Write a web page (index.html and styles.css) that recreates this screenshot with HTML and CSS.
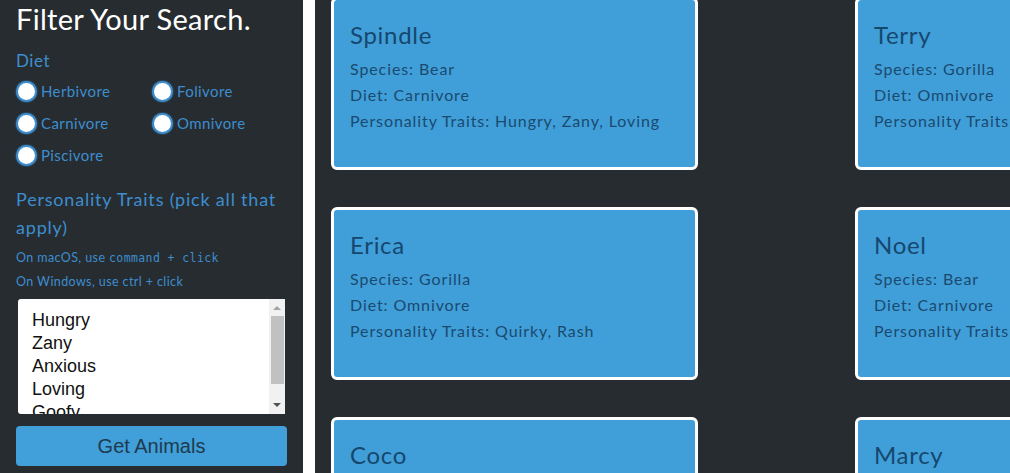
FILE: index.html
```html
<!DOCTYPE html>
<html>
<head>
<meta charset="utf-8">
<link rel="stylesheet" href="styles.css">
</head>
<body>
<div class="page">
  <aside class="sidebar">
    <h1 class="title">Filter Your Search.</h1>
    <div class="label">Diet</div>
    <div class="radios">
      <label class="radio"><input type="radio" name="diet"><span>Herbivore</span></label>
      <label class="radio"><input type="radio" name="diet"><span>Folivore</span></label>
      <label class="radio"><input type="radio" name="diet"><span>Carnivore</span></label>
      <label class="radio"><input type="radio" name="diet"><span>Omnivore</span></label>
      <label class="radio"><input type="radio" name="diet"><span>Piscivore</span></label>
    </div>
    <div class="label traits">Personality Traits (pick all that apply)</div>
    <p class="hint first">On macOS, use <code>command + click</code></p>
    <p class="hint">On Windows, use ctrl + click</p>
    <div class="listbox" role="listbox" aria-multiselectable="true">
      <div class="options">
        <div class="option" role="option">Hungry</div>
        <div class="option" role="option">Zany</div>
        <div class="option" role="option">Anxious</div>
        <div class="option" role="option">Loving</div>
        <div class="option" role="option">Goofy</div>
      </div>
      <div class="scrollbar">
        <span class="arrow up"></span>
        <span class="thumb"></span>
        <span class="arrow down"></span>
      </div>
    </div>
    <button class="btn">Get Animals</button>
  </aside>
  <div class="divider"></div>
  <main class="main">
    <div class="grid">
      <div class="card"><h2>Spindle</h2><p>Species: Bear</p><p>Diet: Carnivore</p><p>Personality Traits: Hungry, Zany, Loving</p></div>
      <div class="card"><h2>Terry</h2><p>Species: Gorilla</p><p>Diet: Omnivore</p><p>Personality Traits: Goofy, Anxious</p></div>
      <div class="card"><h2>Erica</h2><p>Species: Gorilla</p><p>Diet: Omnivore</p><p>Personality Traits: Quirky, Rash</p></div>
      <div class="card"><h2>Noel</h2><p>Species: Bear</p><p>Diet: Carnivore</p><p>Personality Traits: Loving, Goofy</p></div>
      <div class="card"><h2>Coco</h2><p>Species: Bear</p><p>Diet: Herbivore</p><p>Personality Traits: Zany</p></div>
      <div class="card"><h2>Marcy</h2><p>Species: Gorilla</p><p>Diet: Folivore</p><p>Personality Traits: Anxious</p></div>
    </div>
  </main>
</div>
</body>
</html>
```
FILE: styles.css
```css
html, body {
  margin: 0;
  padding: 0;
  height: 100%;
  overflow: hidden;
  background: #272c30;
}
.page {
  display: flex;
  height: 473px;
  overflow: hidden;
}
.sidebar {
  width: 303px;
  flex: 0 0 303px;
  background: #272c30;
  box-sizing: border-box;
  padding: 0 16px;
  font-family: "Lato", sans-serif;
  color: #3d8ecf;
}
.title {
  margin: 2px 0 0;
  font-family: "Lato", sans-serif;
  font-weight: 400;
  font-size: 29px;
  letter-spacing: 0.3px;
  line-height: 34px;
  color: #ffffff;
}
.label {
  font-size: 17px;
  letter-spacing: 0.6px;
  line-height: 28px;
  margin-top: 11px;
  color: #3d8ecf;
}
.radios {
  display: grid;
  grid-template-columns: 136px 136px;
  row-gap: 10px;
  margin-top: 5px;
}
.radio {
  display: flex;
  align-items: center;
  gap: 4px;
  font-size: 15px;
  letter-spacing: 0.4px;
  height: 22px;
  color: #3d8ecf;
}
.radio input {
  appearance: none;
  -webkit-appearance: none;
  margin: 0;
  width: 21px;
  height: 21px;
  border-radius: 50%;
  background: #ffffff;
  border: 2px solid #3d8ecf;
  box-sizing: border-box;
  box-shadow: 0 0 2px #3d8ecf;
}
.label.traits {
  margin-top: 19px;
  font-size: 18px;
  letter-spacing: 0.8px;
  line-height: 28px;
}
.hint {
  margin: 0;
  font-size: 12.5px;
  letter-spacing: 0.4px;
  line-height: 24px;
  color: #3d8ecf;
}
.hint.first { margin-top: 5px; }
.hint code {
  font-family: "DejaVu Sans Mono", monospace;
  font-size: 11.5px;
  letter-spacing: 0.4px;
}
.listbox {
  display: flex;
  margin: 5px 0 0 2px;
  width: 267px;
  height: 115px;
  background: #fff;
  border-radius: 3px 0 0 3px;
  overflow: hidden;
}
.options {
  flex: 1;
  padding: 10px 0 0 14px;
  font-family: "Liberation Sans", Arial, sans-serif;
  font-size: 18px;
  color: #111;
  overflow: hidden;
}
.option {
  line-height: 23px;
  height: 23px;
}
.scrollbar {
  flex: 0 0 16px;
  background: #f1f1f1;
  display: flex;
  flex-direction: column;
  align-items: center;
  box-sizing: border-box;
  padding: 0 1px;
}
.arrow {
  width: 0;
  height: 0;
  border-left: 4px solid transparent;
  border-right: 4px solid transparent;
}
.arrow.up {
  margin-top: 7px;
  border-bottom: 4px solid #a3a3a3;
}
.arrow.down {
  margin-top: 19px;
  border-top: 4px solid #505050;
}
.thumb {
  display: block;
  margin-top: 6px;
  width: 13px;
  height: 68px;
  background: #c1c1c1;
}
.btn {
  display: block;
  margin-top: 12px;
  width: 271px;
  height: 40px;
  border: none;
  border-radius: 4px;
  background: #419fd9;
  color: #1e3a4f;
  font-family: "Liberation Sans", Arial, sans-serif;
  font-size: 20px;
}
.divider {
  flex: 0 0 12px;
  background: #ffffff;
}
.main {
  flex: 1;
  overflow: hidden;
  background: #272c30;
}
.grid {
  display: grid;
  grid-template-columns: 367px 367px;
  column-gap: 157px;
  row-gap: 37px;
  margin-top: -3px;
  padding-left: 16px;
}
.card {
  height: 173px;
  box-sizing: border-box;
  border: 3px solid #ffffff;
  border-radius: 6px;
  background: #409fd9;
  padding: 20px 16px;
  font-family: "Lato", sans-serif;
  color: #1a4a6f;
  overflow: hidden;
}
.card h2 {
  margin: 0 0 6px;
  font-weight: 400;
  font-size: 24px;
  letter-spacing: 0.7px;
  line-height: 30px;
  white-space: nowrap;
  color: #16476e;
}
.card p {
  margin: 0;
  font-size: 16px;
  letter-spacing: 0.9px;
  line-height: 26px;
  white-space: nowrap;
}
```
